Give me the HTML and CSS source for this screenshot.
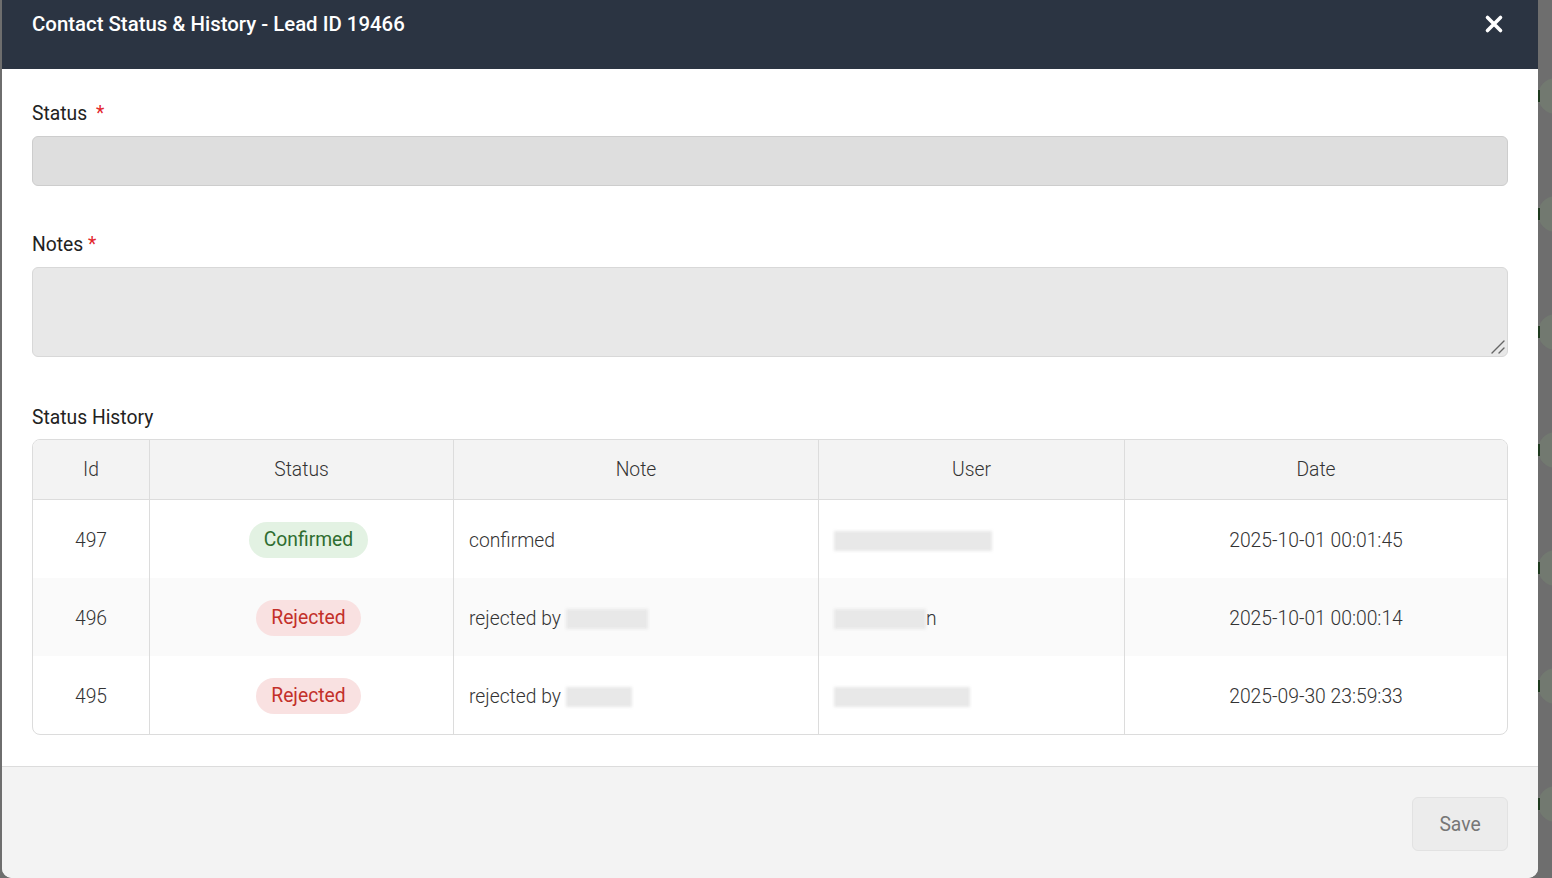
FILE: index.html
```html
<!DOCTYPE html>
<html lang="en">
<head>
  <meta charset="UTF-8">
  <meta name="viewport" content="width=device-width, initial-scale=1.0">
  <title>Contact Status &amp; History</title>
  <link rel="stylesheet" href="styles.css">
</head>
<body>
  <div class="backdrop">
    <div class="dots">
      <span class="dot"></span>
      <span class="dot"></span>
      <span class="dot"></span>
      <span class="dot"></span>
      <span class="dot"></span>
      <span class="dot"></span>
      <span class="dot"></span>
    </div>
  </div>

  <div class="modal">
    <div class="modal-header">
      <h2 class="modal-title">Contact Status &amp; History - Lead ID 19466</h2>
      <button class="close-btn" aria-label="Close">
        <svg width="20" height="20" viewBox="0 0 20 20">
          <path d="M3.5 3.5 L16.5 16.5 M16.5 3.5 L3.5 16.5" stroke="#fff" stroke-width="3.6" stroke-linecap="round"/>
        </svg>
      </button>
    </div>

    <div class="modal-body">
      <label class="field-label">Status <span class="req req-gap">*</span></label>
      <div class="select-box"></div>

      <label class="field-label notes-label">Notes <span class="req">*</span></label>
      <div class="notes-wrap">
        <textarea class="notes-box"></textarea>
        <svg class="grip" width="16" height="16" viewBox="0 0 16 16">
          <path d="M2 14 L14 2 M9 14 L14 9" stroke="#666" stroke-width="1.4" stroke-linecap="round"/>
        </svg>
      </div>

      <div class="section-title">Status History</div>
      <div class="table-wrap">
        <table class="history">
          <thead>
            <tr>
              <th class="c-id">Id</th>
              <th class="c-status">Status</th>
              <th class="c-note">Note</th>
              <th class="c-user">User</th>
              <th class="c-date">Date</th>
            </tr>
          </thead>
          <tbody>
            <tr>
              <td class="center">497</td>
              <td class="center badge-cell"><span class="badge ok">Confirmed</span></td>
              <td>confirmed</td>
              <td><span class="blur" style="width:158px"></span></td>
              <td class="center">2025-10-01 00:01:45</td>
            </tr>
            <tr class="alt">
              <td class="center">496</td>
              <td class="center badge-cell"><span class="badge bad">Rejected</span></td>
              <td>rejected by <span class="blur" style="width:82px"></span></td>
              <td><span class="blur" style="width:92px"></span>n</td>
              <td class="center">2025-10-01 00:00:14</td>
            </tr>
            <tr>
              <td class="center">495</td>
              <td class="center badge-cell"><span class="badge bad">Rejected</span></td>
              <td>rejected by <span class="blur" style="width:66px"></span></td>
              <td><span class="blur" style="width:136px"></span></td>
              <td class="center">2025-09-30 23:59:33</td>
            </tr>
          </tbody>
        </table>
      </div>
    </div>

    <div class="modal-footer">
      <button class="save-btn">Save</button>
    </div>
  </div>
</body>
</html>
```

FILE: styles.css
```css
* {
  box-sizing: border-box;
}

body {
  margin: 0;
  height: 878px;
  overflow: hidden;
  background: #6e6e6e;
  font-family: Roboto, 'Liberation Sans', sans-serif;
  color: #333;
  position: relative;
}

/* dimmed page behind the modal */
.backdrop {
  position: absolute;
  top: 0;
  right: 0;
  width: 14px;
  height: 100%;
  overflow: hidden;
}

.dots {
  display: flex;
  flex-direction: column;
  gap: 82px;
  padding-top: 78px;
}

.dot {
  position: relative;
  display: block;
  width: 36px;
  height: 36px;
  border-radius: 50%;
  background: #727970;
}

.dot::before {
  content: "";
  position: absolute;
  left: 0;
  top: 12px;
  width: 2px;
  height: 12px;
  background: #1f3a1f;
}

.modal {
  position: relative;
  margin-left: 2px;
  width: 1536px;
  height: 878px;
  background: #fff;
  border-radius: 0 0 10px 10px;
  overflow: hidden;
  display: flex;
  flex-direction: column;
}

.modal-header {
  height: 69px;
  background: #2b3442;
  display: flex;
  justify-content: space-between;
  align-items: flex-start;
  padding: 11px 34px 0 30px;
}

.modal-title {
  margin: 0;
  color: #fff;
  font-size: 20.4px;
  font-weight: 500;
  line-height: 26px;
}

.close-btn {
  background: none;
  border: none;
  padding: 0;
  margin-top: 3px;
  cursor: pointer;
}

.modal-body {
  padding: 33px 30px 30px 30px;
  flex: 1;
}

.field-label {
  display: block;
  font-size: 19.3px;
  line-height: 24px;
  color: #222;
}

.req {
  color: #e3262c;
}

.req-gap {
  margin-left: 4px;
}

.select-box {
  margin-top: 10px;
  height: 50px;
  background: #dedede;
  border: 1px solid #cdcdcd;
  border-radius: 6px;
}

.notes-label {
  margin-top: 47px;
}

.notes-wrap {
  position: relative;
  margin-top: 10px;
}

.notes-box {
  display: block;
  width: 100%;
  height: 90px;
  background: #e8e8e8;
  border: 1px solid #d8d8d8;
  border-radius: 6px;
  resize: none;
  font-family: inherit;
}

.grip {
  position: absolute;
  right: 2px;
  bottom: 2px;
}

.section-title {
  margin-top: 49px;
  font-size: 19.3px;
  line-height: 24px;
  color: #222;
}

.table-wrap {
  margin-top: 9px;
  border: 1px solid #dcdcdc;
  border-radius: 8px;
  overflow: hidden;
}

.history {
  width: 100%;
  border-collapse: separate;
  border-spacing: 0;
  font-size: 19.3px;
  font-weight: 300;
  table-layout: fixed;
}

.history th {
  height: 60px;
  padding-top: 1px;
  background: #f3f3f3;
  font-weight: 300;
  color: #333;
  border-bottom: 1px solid #dcdcdc;
  text-align: center;
}

.history th,
.history td {
  border-right: 1px solid #dcdcdc;
}

.history th:last-child,
.history td:last-child {
  border-right: none;
}

.c-id { width: 117px; }
.c-status { width: 304px; }
.c-note { width: 365px; }
.c-user { width: 306px; }

.history td {
  height: 78px;
  padding: 2px 14px 0 15px;
  color: #333;
  white-space: nowrap;
}

.history td.center {
  text-align: center;
  padding: 2px 0 0 0;
}

.history td.badge-cell {
  padding-left: 14px;
}

.history tr.alt td {
  background: #fafafa;
}

.badge {
  display: inline-block;
  padding: 0 15px;
  height: 36px;
  line-height: 36px;
  border-radius: 18px;
  font-weight: 400;
}

.badge.ok {
  background: #e3f2e3;
  color: #2f6d30;
}

.badge.bad {
  background: #f9e1e1;
  color: #c3302a;
}

.blur {
  display: inline-block;
  height: 20px;
  vertical-align: middle;
  background: #e8e8e8;
  filter: blur(1.5px);
}

.modal-footer {
  height: 112px;
  background: #f3f3f3;
  border-top: 1px solid #dcdcdc;
  display: flex;
  justify-content: flex-end;
  align-items: flex-start;
  padding: 30px 30px 0 0;
}

.save-btn {
  width: 96px;
  height: 54px;
  background: #ececec;
  border: 1px solid #e2e2e2;
  border-radius: 6px;
  color: #777;
  font-family: inherit;
  font-size: 19.3px;
}
```
